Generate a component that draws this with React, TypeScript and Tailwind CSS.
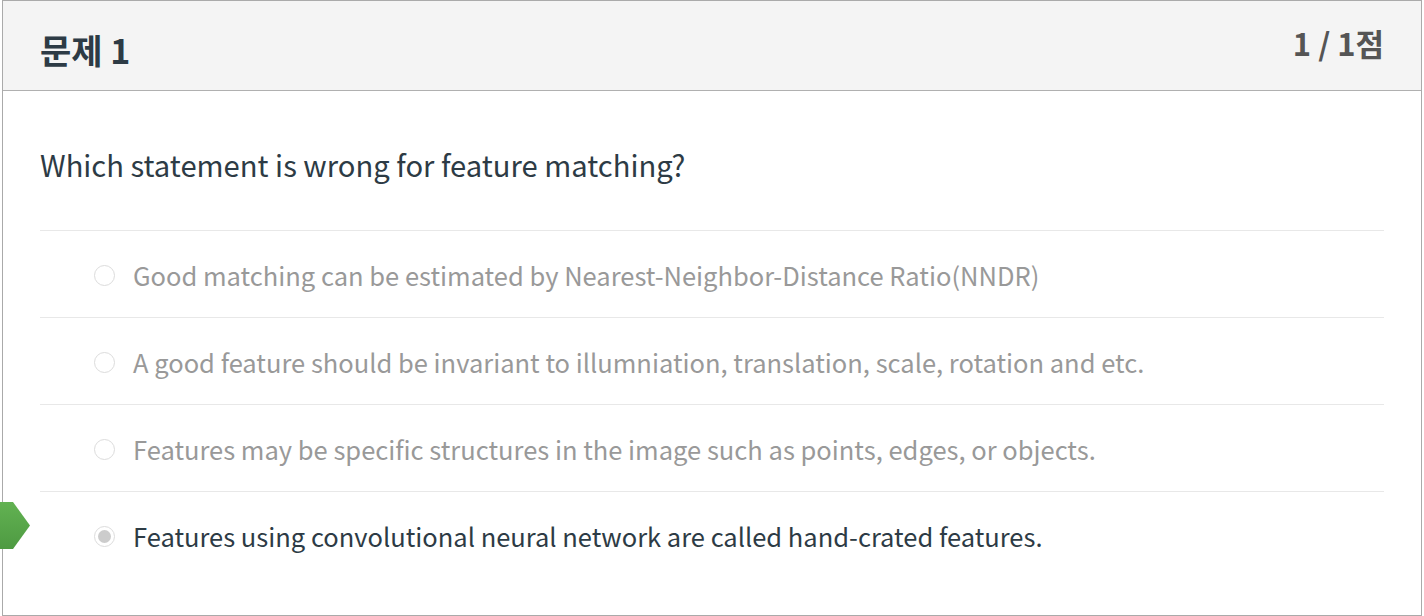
import React from "react";

const options = [
  { text: "Good matching can be estimated by Nearest-Neighbor-Distance Ratio(NNDR)", selected: false },
  { text: "A good feature should be invariant to illumniation, translation, scale, rotation and etc.", selected: false },
  { text: "Features may be specific structures in the image such as points, edges, or objects.", selected: false },
  { text: "Features using convolutional neural network are called hand-crated features.", selected: true },
];

export default function App() {
  return (
    <div
      className="w-[1424px] h-[616px] bg-white relative"
      style={{ fontFamily: '"Noto Sans CJK KR", "Noto Sans", sans-serif' }}
    >
      <div className="ml-[2px] w-[1420px] h-[616px] border border-[#aaaaaa] flex flex-col">
        <div className="h-[90px] shrink-0 bg-[#f4f4f4] border-b border-[#b0b0b0] flex items-center justify-between pl-[37px] pr-[37px]">
          <div className="text-[34px] font-bold text-[#2d3b45] leading-none mt-[8px]">문제 1</div>
          <div className="text-[31px] font-bold text-[#555555] leading-none -mt-[6px]">1 / 1점</div>
        </div>
        <div className="pl-[37px] pr-[37px]">
          <div className="h-[139px] flex items-center text-[29.2px] text-[#2d3b45] pt-[8px]">
            Which statement is wrong for feature matching?
          </div>
          {options.map((o, i) => (
            <div key={i} className="h-[87px] border-t border-[#e8e8e8] flex items-center pl-[54px] pt-[3px]">
              <div className="w-[21px] h-[21px] rounded-full border border-[#dcdcdc] bg-white flex items-center justify-center shrink-0">
                {o.selected && <div className="w-[13px] h-[13px] rounded-full bg-[#cccccc]" />}
              </div>
              <div
                className={`ml-[18px] text-[25.5px] ${o.selected ? "text-[#2d3b45]" : "text-[#999999]"}`}
              >
                {o.text}
              </div>
            </div>
          ))}
        </div>
      </div>
      <svg className="absolute left-0 top-[502px]" width="31" height="48" viewBox="0 0 31 48">
        <defs>
          <linearGradient id="g" x1="0" y1="0" x2="0" y2="1">
            <stop offset="0" stopColor="#62b252" />
            <stop offset="1" stopColor="#4e9a42" />
          </linearGradient>
        </defs>
        <path d="M0 0 H13 L30 23.5 L13 47 H0 Z" fill="url(#g)" />
      </svg>
    </div>
  );
}
